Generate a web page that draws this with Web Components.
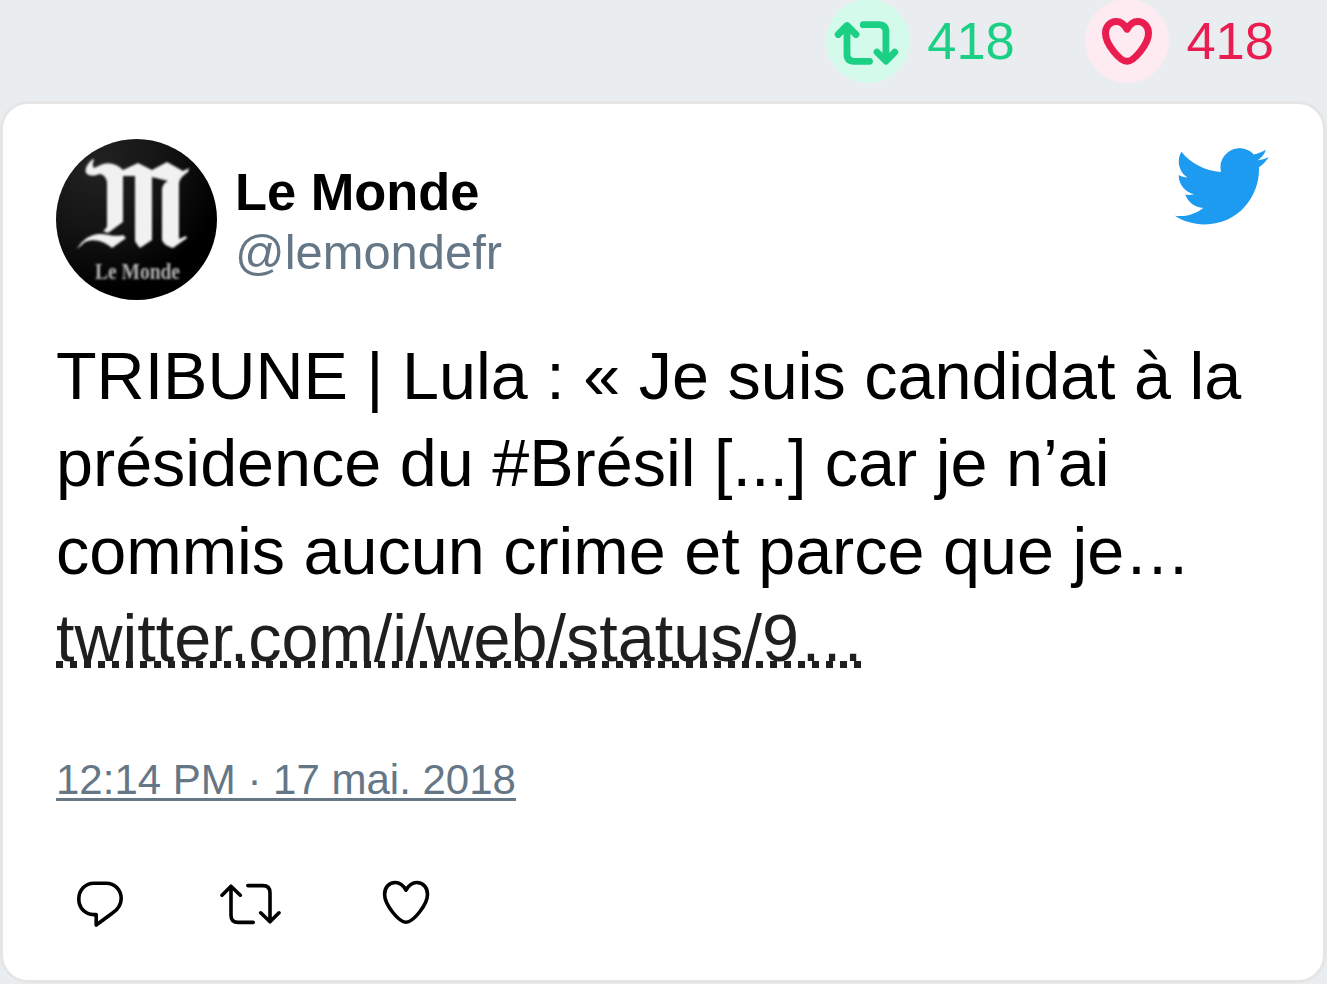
<!DOCTYPE html>
<html lang="fr">
<head>
<meta charset="utf-8">
<title>Le Monde</title>
<style>
html,body{margin:0;height:984px;overflow:hidden;background:#e9edf0;font-family:"Liberation Sans",Arial,sans-serif}
</style>
</head>
<body>
<tweet-page></tweet-page>
<script>
const define = (name, html) => customElements.define(name, class extends HTMLElement {
  constructor() {
    super();
    this.attachShadow({ mode: 'open' }).innerHTML = html;
  }
});

define('tweet-stat', `
<style>
:host{display:flex;align-items:center;gap:17px;height:84px;font-size:52.5px;line-height:60px;color:var(--ink)}
.disc{width:84px;height:84px;border-radius:50%;background:var(--disc);flex:none}
::slotted(svg){display:block;width:84px;height:84px}
</style>
<div class="disc"><slot name="icon"></slot></div><span><slot></slot></span>`);

define('tweet-avatar', `
<style>
:host{display:block;width:161px;height:161px;border-radius:50%;overflow:hidden;background:radial-gradient(circle at 25% 15%,#222 0,#151515 35%,#000 70%)}
svg{display:block;width:161px;height:161px}
</style>
<svg viewBox="0 0 161 161">
<defs><filter id="soft" x="-10%" y="-10%" width="120%" height="120%"><feGaussianBlur stdDeviation="1.2"/></filter></defs>
<g fill="#f1f1f1" filter="url(#soft)">
<path d="M37 20C33 23 28 29 30 34C34 38 40 37 43 35C47 35 50 38 51 43V86C51 88 50 90 47 92L52 94L67 83V37L79 37V102Q81 106 84 109L96 101V38L112 42C108 44 107 46 106 50V101C107 104 110 107 117 109L131 99L130 97L123 100V46C123 41 125 38 132 33L133 29L127 32L111 23L96 31L82 24L67 31C61 25 54 23 47 25L38 29C36 27 37 23 38 21Z"/>
<path d="M21 110C27 99 37 94 46 95C54 96 61 98 67 96L70 99L56 109C48 102 38 99 29 103Z"/>
</g>
<text x="39" y="140" textLength="85" lengthAdjust="spacingAndGlyphs" font-family="Liberation Serif,serif" font-weight="bold" font-size="24" fill="#b4b4b4" filter="url(#soft)">Le Monde</text>
</svg>`);

define('tweet-author', `
<style>
:host{display:flex;align-items:center;gap:18px;height:161px}
.names{display:flex;flex-direction:column;padding-top:4px}
.name{font-size:52.4px;font-weight:700;line-height:60px;color:#000}
.handle{font-size:48.9px;line-height:60px;color:#657786}
</style>
<tweet-avatar></tweet-avatar>
<div class="names"><span class="name"><slot name="name"></slot></span><span class="handle"><slot name="handle"></slot></span></div>`);

define('tweet-bird', `
<style>:host{display:block;width:99px;height:99px}svg{display:block}</style>
<svg width="99" height="99" viewBox="0 0 24 24" fill="#1d9bf0"><path d="M23.643 4.937c-.835.37-1.732.62-2.675.733.962-.576 1.7-1.49 2.048-2.578-.9.534-1.897.922-2.958 1.13-.85-.904-2.06-1.47-3.4-1.47-2.572 0-4.658 2.086-4.658 4.66 0 .364.042.718.12 1.06-3.873-.195-7.304-2.05-9.602-4.868-.4.69-.63 1.49-.63 2.342 0 1.616.823 3.043 2.072 3.878-.764-.025-1.482-.234-2.11-.583v.06c0 2.257 1.605 4.14 3.737 4.568-.392.106-.803.162-1.227.162-.3 0-.593-.028-.877-.082.593 1.85 2.313 3.198 4.352 3.234-1.595 1.25-3.604 1.995-5.786 1.995-.376 0-.747-.022-1.112-.065 2.062 1.323 4.51 2.093 7.14 2.093 8.57 0 13.255-7.098 13.255-13.254 0-.2-.005-.402-.014-.602.91-.658 1.7-1.477 2.323-2.41z"/></svg>`);

define('tweet-link', `
<style>
:host{display:inline-block;height:87px;color:#1f1f1f;background:repeating-linear-gradient(90deg,#1f1f1f 0 7px,transparent 7px 14px) 0 66px/100% 7px no-repeat}
</style><slot></slot>`);

define('tweet-actions', `
<style>
:host{display:flex;align-items:center;height:60px}
svg{display:block;fill:none;stroke:#000;stroke-width:3.6;stroke-linecap:round;stroke-linejoin:round}
.reply{margin-right:92px}.retweet{margin-right:92px}
</style>
<svg class="reply" width="60" height="60" viewBox="70 873 60 60"><path d="M94 883.2h12c9 0 15.2 7 15.2 15.3 0 6.5-3.7 11.3-9 14.8L96.2 925V914.6H93.6C85 914.6 78.8 907.8 78.8 899S85.2 883.2 94 883.2Z"/></svg>
<svg class="retweet" width="68" height="60" viewBox="217 873 68 60" style="margin-left:-5px"><path d="M222 895.2l9-9 9.3 9M231 886.5v28.7q0 7.2 7.2 7.2H253.2M247.8 885.6h15q7.2 0 7.2 7.2v28.7M260.7 912.8l9.3 9 9-9"/></svg>
<svg width="60" height="60" viewBox="376 873 60 60" style="margin-left:-1px"><path d="M406 890.2C403 884.8 399.5 882.5 395.3 882.5C388.6 882.5 384.6 888 384.6 894.2C384.6 905 399 922.2 406 922.2S427.5 905 427.5 894.2C427.5 888 423.4 882.5 416.7 882.5C412.5 882.5 409 884.8 406 890.2Z"/></svg>`);

define('tweet-card', `
<style>
:host{display:block;box-sizing:border-box;width:1326px;height:882px;background:#fff;border:3.5px solid #e5e5e5;border-radius:28px;padding:35px 53px 0 53px}
header{display:flex;justify-content:space-between;align-items:flex-start;height:161px}
tweet-bird{margin:-2px 0 0}
.text{margin:32.5px 0 0;font-size:66.5px;line-height:87.5px;color:#000;white-space:nowrap}
time{display:block;margin-top:72.5px;font-size:42px;line-height:50px;color:#657786;text-decoration:underline;text-decoration-thickness:3px;text-underline-offset:4px;text-decoration-skip-ink:none}
tweet-actions{margin:68px 0 0 14px}
</style>
<header><tweet-author><slot name="name" slot="name"></slot><slot name="handle" slot="handle"></slot></tweet-author><tweet-bird></tweet-bird></header>
<p class="text"><slot></slot></p>
<time><slot name="date"></slot></time>
<tweet-actions></tweet-actions>`);

define('tweet-page', `
<style>
:host{display:block;width:1327px;height:984px;overflow:hidden}
.stats{display:flex;justify-content:flex-end;gap:70.6px;height:84px;margin:-1px 53px 18px 0}
</style>
<div class="stats">
<tweet-stat style="--ink:#1bd085;--disc:#d3faea"><svg slot="icon" viewBox="826 -1 84 84" fill="none" stroke="#1bd085" stroke-width="6.8" stroke-linecap="round" stroke-linejoin="round"><path d="M838.2 34.5l8.8-9 9 9M847 26v28q0 7.3 7.3 7.3h15.2M863.3 24.7h15.2q7.4 0 7.4 7.4v28M877 52.2l9 9 8.8-9"/></svg>418</tweet-stat>
<tweet-stat style="--ink:#e91d50;--disc:#feebf1"><svg slot="icon" viewBox="1085 -1 84 84" fill="none" stroke="#e91d50" stroke-width="7" stroke-linecap="round" stroke-linejoin="round"><path d="M1127 29.2C1124 23.8 1120.7 21.5 1116.3 21.5C1109.6 21.5 1105.5 27 1105.5 33.2C1105.5 44 1120 61.3 1127 61.3S1148.5 44 1148.5 33.2C1148.5 27 1144.4 21.5 1137.7 21.5C1133.3 21.5 1130 23.8 1127 29.2Z"/></svg>418</tweet-stat>
</div>
<tweet-card><span slot="name">Le Monde</span><span slot="handle">@lemondefr</span>TRIBUNE | Lula : « Je suis candidat à la<br>présidence du #Brésil [...] car je n’ai<br>commis aucun crime et parce que je…<br><tweet-link>twitter.com/i/web/status/9…</tweet-link><span slot="date">12:14 PM · 17 mai. 2018</span></tweet-card>`);
</script>
</body>
</html>
